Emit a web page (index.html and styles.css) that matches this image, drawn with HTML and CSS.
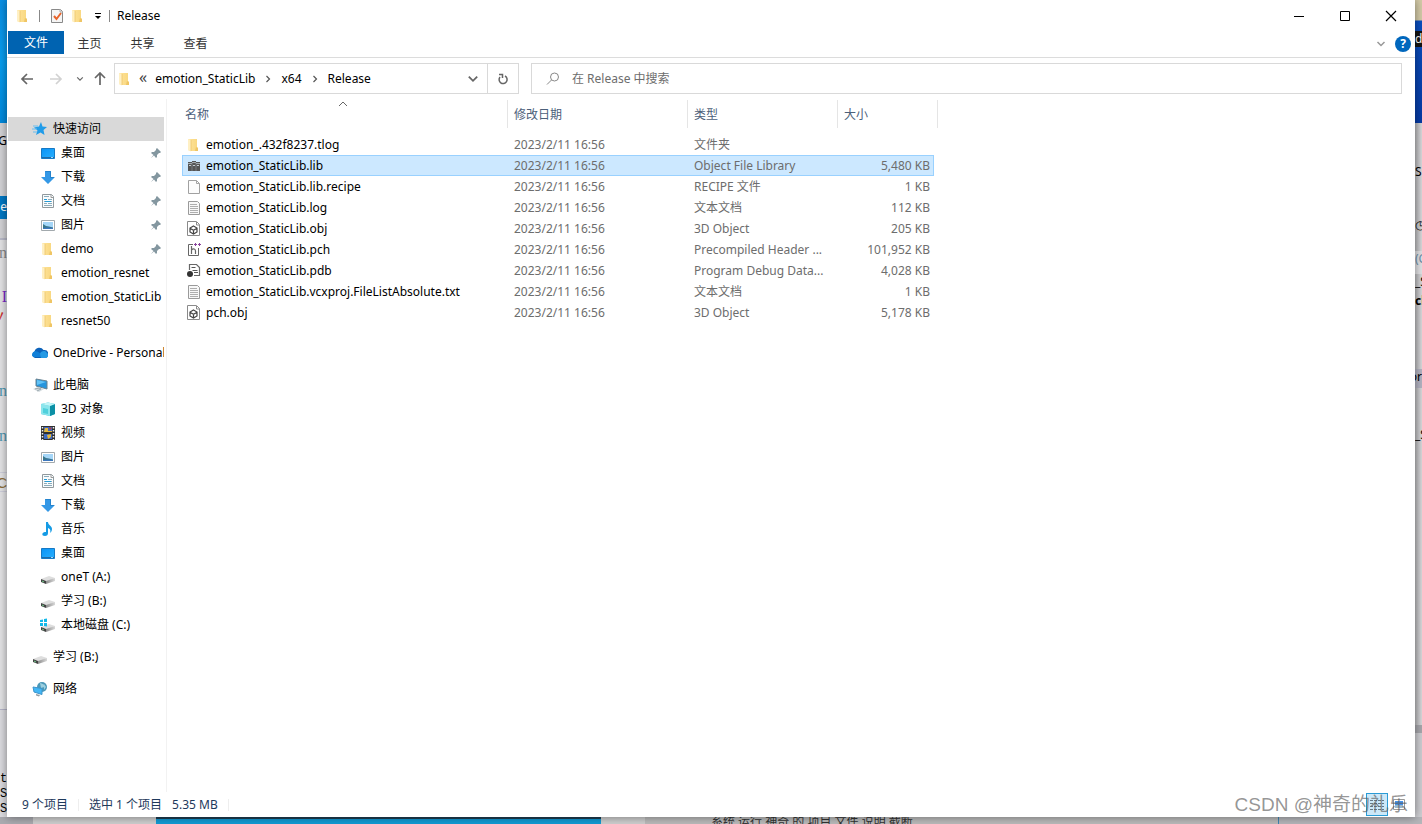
FILE: index.html
```html
<!DOCTYPE html>
<html lang="zh-CN">
<head>
<meta charset="utf-8">
<title>Release</title>
<link rel="stylesheet" href="styles.css">
</head>
<body>
<svg class="sprite" aria-hidden="true">
  <defs>
    <linearGradient id="gold" x1="0" x2="1"><stop offset="0" stop-color="#ffe39a"/><stop offset="1" stop-color="#f8d77f"/></linearGradient>
    <linearGradient id="blue" x1="0" y1="0" x2="1" y2="1"><stop offset="0" stop-color="#0a93f5"/><stop offset="1" stop-color="#29b0ff"/></linearGradient>
    <linearGradient id="steel" x1="0" x2="1"><stop offset="0" stop-color="#8d8d8d"/><stop offset="1" stop-color="#d8d8d8"/></linearGradient>
  </defs>
  <symbol id="folder" viewBox="0 0 16 16"><path d="M2 2h9v8l1 1v3H4l-2-1z" fill="url(#gold)"/><path d="M10 10l2 1v3h-3z" fill="#efc565"/><path d="M2 2l3 1v11.500L2 13z" fill="#fff0c4"/><path d="M5 3v11" stroke="#ecc469" stroke-width=".8"/></symbol>
  <symbol id="check" viewBox="0 0 16 16"><path d="M2.500 1.500h9l2 2v11h-11z" fill="#f5f5f5" stroke="#898989"/><path d="M11 1v3h3" fill="none" stroke="#aaa"/><path d="M5 8l2.500 3L12 5" fill="none" stroke="#e8642b" stroke-width="2"/></symbol>
  <symbol id="star" viewBox="0 0 16 16"><path d="M9 1l1.500 4.500L15 6l-3.500 3 1 5-4-2.600-4.500 2.600 1.500-4.500L2 6.500l5-1z" fill="#209ce9"/><path d="M1 5h5M0 8h5M1 11h4" stroke="#67bdf0"/></symbol>
  <symbol id="desktop" viewBox="0 0 16 16"><path d="M1.500 3.500h13v10h-13z" fill="url(#blue)" stroke="#1679c5"/><path d="M2 12.500h12" stroke="#1e6ba6"/><path d="M11 12.500h2" stroke="#9fd4f8"/></symbol>
  <symbol id="download" viewBox="0 0 16 16"><path d="M5 2h6v6h4l-7 7-7-7h4z" fill="#3498e6"/><path d="M5.500 2.500h5V8.500H14" fill="none" stroke="#2583cc"/></symbol>
  <symbol id="document" viewBox="0 0 16 16"><path d="M2.500 1.500h9l2 2v11h-11z" fill="#fafcfd" stroke="#919a9e"/><path d="M4 3.500h5M8 6.500h4M4 8.500h8M4 10.500h3M8 10.500h4M4 12.500h8" stroke="#8dacba"/><path d="M4 6.500h3M5 8.500h6" stroke="#229bd6"/><path d="M11 1.500v3h2" fill="none" stroke="#999"/></symbol>
  <symbol id="picture" viewBox="0 0 16 16"><path d="M1.500 3.500h13v10h-13z" fill="#fff" stroke="#a2a9ad"/><path d="M3 5h10v7H3z" fill="#a5d6f8"/><path d="M3 7l3 2 3 .500 4 1v1.500H3z" fill="#39768b"/><path d="M3 11l5-.500 5 .500v1H3z" fill="#3d77bd"/></symbol>
  <symbol id="pin" viewBox="0 0 10 10"><path d="M6 0l4 4-1 1-1 0-2 2v2L5 10 3 7.500 0 10l2.500-3L0 5l1-1h2l2-2V1z" fill="#8497a0"/></symbol>
  <symbol id="cloud" viewBox="0 0 16 16"><path d="M3 13a3.500 3.500 0 0 1-.500-6.500A5 5 0 0 1 11.500 5a4 4 0 0 1 1.500 8z" fill="#0c62ba"/><path d="M0 10c0-4 4-5 7-2.500l6 4.500H3c-2 0-3-.500-3-2z" fill="#1080d8"/><path d="M8 8.500c2-3 5-3 6.500-1 2.500 1 2 5.500-1 5.500H9z" fill="#2499e4"/></symbol>
  <symbol id="computer" viewBox="0 0 16 16"><path d="M4 2l11 2v8L4 9z" fill="#2695dd" stroke="#698391"/><path d="M5 3l9 2-9 3z" fill="#62c3f6"/><path d="M1 12l5-2 6 2-5 3z" fill="#d2dade"/><path d="M3 12l4-1 2 1-4 2" fill="none" stroke="#9aa8ae"/></symbol>
  <symbol id="cube" viewBox="0 0 16 16"><path d="M1 3l7-1.500L15 3v10l-5 2-9-2z" fill="#35c3d5"/><path d="M1 3l9 2v10l-9-2z" fill="#8be5ec"/><path d="M10 5l5-2v10l-5 2z" fill="#0b8fa5"/><path d="M1 3l7-1.500L15 3l-5 2z" fill="#c2f5f7"/><path d="M3 7l5 1v5l-5-1z" fill="#4fd0dc"/></symbol>
  <symbol id="film" viewBox="0 0 16 16"><path d="M1 1h14v14H1z" fill="#303030"/><path d="M2.500 2v13M13.500 2v13" stroke="#eee" stroke-width="1.500" stroke-dasharray="1.500 1.500"/><path d="M4 2h8v5H4zM4 9h8v5H4z" fill="#3d69c2"/><path d="M5 3h3v3h4v1H4zM7 10l4-1v3l-3 2z" fill="#e5b83b"/><path d="M9 2l3 1-2 2z" fill="#b13b3a"/></symbol>
  <symbol id="music" viewBox="0 0 16 16"><path d="M8 1c0 3 4 4 4 7 0 2-1 3-2 4 1-3 0-4-2-5v5c0 2-1 3-3 3-4 0-3-4 0-4h1V1z" fill="#159be5"/></symbol>
  <symbol id="drive" viewBox="0 0 16 16"><path d="M1 10l8-3 6 2-9 4z" fill="#dedede"/><path d="M1 10l5 2v3l-5-2z" fill="#434343"/><path d="M6 12l9-3v3l-9 3z" fill="url(#steel)"/><path d="M2 12l2 1" stroke="#73ce8c"/></symbol>
  <symbol id="windrive" viewBox="0 0 16 16"><use href="#drive"/><path d="M0 3l3-.5V5H0zM4 2l3-.5V5H4zM0 6h3v3H0zM4 6h3v3.500L4 9z" fill="#12b9e9"/></symbol>
  <symbol id="network" viewBox="0 0 16 16"><circle cx="10" cy="6" r="5" fill="#4b98b8"/><path d="M8 2c3 1 5 1 4 4l-3 1M12 3l2 3-2 3" fill="#9bcfdf"/><path d="M1 6l9 1.500v6L2 11z" fill="#43b7f6" stroke="#3d94cb"/><path d="M4 13l4 1-1 1.500-3-1z" fill="#919da4"/></symbol>
  <symbol id="lib" viewBox="0 0 16 16"><path d="M2 4h4v9H2zM6 3h4v10H6zM10 4h4v9h-4z" fill="#555"/><path d="M2 5.500h4M6 4.500h4M10 5.500h4" stroke="#a3abb0"/><path d="M6 5v8M10 5v8" stroke="#8d979e" stroke-width=".6"/><path d="M3 7.500h2M7 7.500h2M11 7.500h2" stroke="#c4ccd1"/></symbol>
  <symbol id="blank" viewBox="0 0 16 16"><path d="M2.500 1.500h8l3 3v10h-11z" fill="#fcfcfc" stroke="#a1a1a1"/><path d="M10.500 1.500v3h3" fill="none" stroke="#a5a5a5"/></symbol>
  <symbol id="textfile" viewBox="0 0 16 16"><path d="M2.500 1.500h9l2 2v11h-11z" fill="#f8f8f8" stroke="#9a9a9a"/><path d="M4 4.500h7M4 6.500h8M4 8.500h8M4 10.500h8M4 12.500h8" stroke="#aeaeae"/></symbol>
  <symbol id="object" viewBox="0 0 16 16"><path d="M1.500.500h9l3 3v11h-12z" fill="#fff" stroke="#8a8a8a"/><path d="M10.500 1v3h3" fill="none" stroke="#8a8a8a"/><path d="M7.500 5l3.500 2v4l-3.500 2L4 11V7zM4 7.200l3.500 2 3.500-2M7.500 9v4" fill="none" stroke="#444" stroke-width="1.200"/></symbol>
  <symbol id="header" viewBox="0 0 16 16"><path d="M7 2.500H2.500v11h10V6" fill="none" stroke="#666"/><path d="M5.500 4v8M5.500 8c2-2 4-1 4 1v3" fill="none" stroke="#666" stroke-width="1.200"/><path d="M8 2.500h3M9.500 1v3M12 2.500h3M13.500 1v3" stroke="#87419a"/></symbol>
  <symbol id="debug" viewBox="0 0 16 16"><path d="M3.500 7V1.500h7l3 3v8H8" fill="none" stroke="#666" stroke-width="1.200"/><path d="M5.500 4.500h4M6.500 7.500h5M8 9.500h4" stroke="#555"/><circle cx="4" cy="11" r="3" fill="#333"/></symbol>
  <symbol id="chev" viewBox="0 0 10 10"><path d="M1.500 3L5 6.500 8.500 3" fill="none" stroke="currentColor" stroke-width="1.500"/></symbol>
  <symbol id="right" viewBox="0 0 10 10"><path d="M3.500 2l3 3-3 3" fill="none" stroke="#555" stroke-width="1.200"/></symbol>
</svg>

<div class="desktop">
  <div class="strip left" aria-hidden="true">
    <div class="sky"></div>
    <div class="panel"><span class="l-g">G</span><span class="l-tab">ne</span></div>
    <div class="code"><span class="grey">n</span><span class="purple">I</span><span class="red">〃</span><span class="teal">n</span><span class="teal next">n</span><span class="brown">C</span></div>
    <div class="lower"><span class="mono">t</span><span class="mono">S</span><span class="mono">S</span></div>
  </div>

  <main class="window">
    <header class="titlebar">
      <svg class="ic"><use href="#folder"/></svg><i class="bar"></i>
      <svg class="ic"><use href="#check"/></svg>
      <svg class="ic small-gap"><use href="#folder"/></svg>
      <button class="quick" aria-label="自定义快速访问工具栏"><svg viewBox="0 0 8 8"><path d="M1 1.500h6" stroke="#000"/><path d="M1 4h6L4 7z"/></svg></button>
      <i class="bar dark"></i>
      <span class="title">Release</span>
      <div class="caption">
        <button aria-label="最小化"><svg viewBox="0 0 12 12"><path d="M1 6.500h10" stroke="#000"/></svg></button>
        <button aria-label="最大化"><svg viewBox="0 0 12 12"><path d="M1.500 1.500h9v9h-9z" fill="none" stroke="#000"/></svg></button>
        <button aria-label="关闭"><svg viewBox="0 0 12 12"><path d="M1 1l10 10M11 1L1 11" stroke="#000" stroke-width="1.200"/></svg></button>
      </div>
    </header>
    <nav class="ribbon">
      <button class="file">文件</button><button>主页</button><button>共享</button><button>查看</button>
      <div class="help"><button aria-label="展开功能区"><svg class="c10"><use href="#chev"/></svg></button><button class="q" aria-label="帮助">?</button></div>
    </nav>
    <div class="addressrow">
      <div class="arrows">
        <button aria-label="后退"><svg viewBox="0 0 14 14"><path d="M7 2L2 7l5 5M2 7h11" fill="none" stroke="#666" stroke-width="1.700"/></svg></button>
        <button aria-label="前进" disabled><svg viewBox="0 0 14 14"><path d="M7 2l5 5-5 5M1 7h11" fill="none" stroke="#d2d2d2" stroke-width="1.700"/></svg></button>
        <button class="recent" aria-label="最近位置"><svg class="c8"><use href="#chev"/></svg></button>
        <button aria-label="上移"><svg viewBox="0 0 14 14"><path d="M2 6l5-5 5 5M7 1v12" fill="none" stroke="#666" stroke-width="1.700"/></svg></button>
      </div>
      <div class="address">
        <svg class="ic"><use href="#folder"/></svg>
        <span class="more">«</span>
        <button>emotion_StaticLib</button><svg class="c10 sep"><use href="#right"/></svg>
        <button>x64</button><svg class="c10 sep"><use href="#right"/></svg>
        <button>Release</button>
        <button class="drop" aria-label="以前的位置"><svg class="c12"><use href="#chev"/></svg></button>
        <button class="refresh" aria-label="刷新"><svg viewBox="0 0 12 12"><path d="M8 3a4 4 0 1 1-5 1M2 1.500h3.500V5" fill="none" stroke="#666" stroke-width="1.500"/></svg></button>
      </div>
      <label class="search"><svg viewBox="0 0 14 14"><circle cx="8.500" cy="5" r="4" fill="none" stroke="#888"/><path d="M5.500 8L1 12.500" stroke="#888"/></svg><input type="text" aria-label="搜索" placeholder="在 Release 中搜索"></label>
    </div>

    <div class="body">
      <nav class="tree">
        <ul>
          <li><a class="root current" href="#"><svg class="ic"><use href="#star"/></svg><span>快速访问</span></a></li>
          <li><a href="#"><svg class="ic"><use href="#desktop"/></svg><span>桌面</span><svg class="pin"><use href="#pin"/></svg></a></li>
          <li><a href="#"><svg class="ic"><use href="#download"/></svg><span>下载</span><svg class="pin"><use href="#pin"/></svg></a></li>
          <li><a href="#"><svg class="ic"><use href="#document"/></svg><span>文档</span><svg class="pin"><use href="#pin"/></svg></a></li>
          <li><a href="#"><svg class="ic"><use href="#picture"/></svg><span>图片</span><svg class="pin"><use href="#pin"/></svg></a></li>
          <li><a href="#"><svg class="ic"><use href="#folder"/></svg><span>demo</span><svg class="pin"><use href="#pin"/></svg></a></li>
          <li><a href="#"><svg class="ic"><use href="#folder"/></svg><span>emotion_resnet</span></a></li>
          <li><a href="#"><svg class="ic"><use href="#folder"/></svg><span>emotion_StaticLib</span></a></li>
          <li><a href="#"><svg class="ic"><use href="#folder"/></svg><span>resnet50</span></a></li>
        </ul>
        <ul><li><a class="root" href="#"><svg class="ic"><use href="#cloud"/></svg><span>OneDrive - Personal</span></a></li></ul>
        <ul>
          <li><a class="root" href="#"><svg class="ic"><use href="#computer"/></svg><span>此电脑</span></a></li>
          <li><a href="#"><svg class="ic"><use href="#cube"/></svg><span>3D 对象</span></a></li>
          <li><a href="#"><svg class="ic"><use href="#film"/></svg><span>视频</span></a></li>
          <li><a href="#"><svg class="ic"><use href="#picture"/></svg><span>图片</span></a></li>
          <li><a href="#"><svg class="ic"><use href="#document"/></svg><span>文档</span></a></li>
          <li><a href="#"><svg class="ic"><use href="#download"/></svg><span>下载</span></a></li>
          <li><a href="#"><svg class="ic"><use href="#music"/></svg><span>音乐</span></a></li>
          <li><a href="#"><svg class="ic"><use href="#desktop"/></svg><span>桌面</span></a></li>
          <li><a href="#"><svg class="ic"><use href="#drive"/></svg><span>oneT (A:)</span></a></li>
          <li><a href="#"><svg class="ic"><use href="#drive"/></svg><span>学习 (B:)</span></a></li>
          <li><a href="#"><svg class="ic"><use href="#windrive"/></svg><span>本地磁盘 (C:)</span></a></li>
        </ul>
        <ul><li><a class="root" href="#"><svg class="ic"><use href="#drive"/></svg><span>学习 (B:)</span></a></li></ul>
        <ul><li><a class="root" href="#"><svg class="ic"><use href="#network"/></svg><span>网络</span></a></li></ul>
      </nav>
      <section class="files">
        <table>
          <colgroup><col class="c-name"><col class="c-date"><col class="c-type"><col class="c-size"></colgroup>
          <thead><tr><th>名称<svg class="sort" viewBox="0 0 10 6"><path d="M1 5l4-4 4 4" fill="none" stroke="#666"/></svg></th><th>修改日期</th><th>类型</th><th>大小</th></tr></thead>
          <tbody>
            <tr><td><div class="name"><svg class="ic"><use href="#folder"/></svg>emotion_.432f8237.tlog</div></td><td>2023/2/11 16:56</td><td>文件夹</td><td></td></tr>
            <tr class="selected"><td><div class="name"><svg class="ic"><use href="#lib"/></svg>emotion_StaticLib.lib</div></td><td>2023/2/11 16:56</td><td>Object File Library</td><td>5,480 KB</td></tr>
            <tr><td><div class="name"><svg class="ic"><use href="#blank"/></svg>emotion_StaticLib.lib.recipe</div></td><td>2023/2/11 16:56</td><td>RECIPE 文件</td><td>1 KB</td></tr>
            <tr><td><div class="name"><svg class="ic"><use href="#textfile"/></svg>emotion_StaticLib.log</div></td><td>2023/2/11 16:56</td><td>文本文档</td><td>112 KB</td></tr>
            <tr><td><div class="name"><svg class="ic"><use href="#object"/></svg>emotion_StaticLib.obj</div></td><td>2023/2/11 16:56</td><td>3D Object</td><td>205 KB</td></tr>
            <tr><td><div class="name"><svg class="ic"><use href="#header"/></svg>emotion_StaticLib.pch</div></td><td>2023/2/11 16:56</td><td>Precompiled Header ...</td><td>101,952 KB</td></tr>
            <tr><td><div class="name"><svg class="ic"><use href="#debug"/></svg>emotion_StaticLib.pdb</div></td><td>2023/2/11 16:56</td><td>Program Debug Data...</td><td>4,028 KB</td></tr>
            <tr><td><div class="name"><svg class="ic"><use href="#textfile"/></svg>emotion_StaticLib.vcxproj.FileListAbsolute.txt</div></td><td>2023/2/11 16:56</td><td>文本文档</td><td>1 KB</td></tr>
            <tr><td><div class="name"><svg class="ic"><use href="#object"/></svg>pch.obj</div></td><td>2023/2/11 16:56</td><td>3D Object</td><td>5,178 KB</td></tr>
          </tbody>
        </table>
      </section>
    </div>
    <footer class="status">
      <span>9 个项目</span><i></i><span>选中 1 个项目</span><span class="bytes">5.35 MB</span><i></i>
      <div class="views">
        <button class="on" aria-label="详细信息"><svg viewBox="0 0 16 16"><path d="M1 3.500h14M1 6.500h14M1 9.500h14M1 12.500h14" stroke="#667985" stroke-dasharray="3 1"/></svg></button>
        <button aria-label="大图标"><svg viewBox="0 0 16 16"><path d="M2.500 2.500h11v10h-11z" fill="#fff" stroke="#999"/><path d="M4 4h8v4H4z" fill="#4794ed"/><path d="M4 8h8v3H4z" fill="#9bb7cc"/></svg></button>
      </div>
    </footer>
    <div class="watermark">CSDN @神奇的礼乐</div>
  </main>

  <div class="strip right" aria-hidden="true">
    <div class="wall"><span>dll</span></div>
    <div class="side"><span class="s1">S</span><span class="s2">◷</span><span class="s3">(C</span><span>_S</span><b>cl</b><span class="s4">or</span><span class="s5">_S</span></div>
    <div class="end"></div>
  </div>
  <div class="under" aria-hidden="true"><div class="u1"></div><div class="u2"></div><div class="u3"></div><div class="u4"></div><div class="u5">系统 运行 神奇 的 项目 文件 说明 截断</div><div class="u6"></div></div>
</div>
</body>
</html>
```

FILE: styles.css
```css
* { box-sizing: border-box; }
body { margin: 0; font: 12px/16px "Noto Sans", "Noto Sans CJK SC", sans-serif; color: #000; }
button { border: 0; background: none; padding: 0; font: inherit; color: inherit; }
ul { list-style: none; margin: 0; padding: 0; }
svg { display: block; flex: none; }
.sprite { position: absolute; width: 0; height: 0; }
.ic { width: 16px; height: 16px; }
.c8 { width: 8px; height: 8px; }
.c10 { width: 10px; height: 10px; }
.c12 { width: 12px; height: 12px; }

.desktop { display: grid; grid-template-columns: 7px minmax(0, 1fr) 7px; grid-template-rows: minmax(0, 1fr) 7px; height: 100vh; overflow: hidden; background: #d9d9dc; }
.strip { display: flex; flex-direction: column; overflow: hidden; white-space: nowrap; }
.strip span, .strip b { display: block; }

.left { background: #e4e4e6; }
.sky { height: 123px; background: linear-gradient(#0a8fe4, #079ef0 50%, #0089dd); }
.panel { display: flex; flex-direction: column; align-items: flex-end; height: 117px; background: #d3d3d6; padding-top: 10px; border-bottom: 2px solid #b9bac9; }
.l-tab { margin-top: 47px; height: 23px; line-height: 22px; background: #0078c4; color: #fff; }
.code { display: flex; flex-direction: column; align-items: flex-end; font: 16px/20px "Liberation Serif", serif; height: 470px; padding-top: 3px; }
.code span { height: 20px; }
.grey { color: #888; }
.code .purple { color: #7a25c8; margin-top: 24px; }
.code .red { color: #c33; }
.code .teal { color: #4f97b0; margin-top: 54px; }
.code .next { margin-top: 25px; }
.code .brown { color: #8d6d3b; font-family: "Liberation Sans", sans-serif; font-size: 14px; margin-top: 26px; border: solid #cfcfdc; border-width: 1px 0; }
.lower { flex: 1; background: #dcdce0; border-top: 1px solid #b5b5c8; padding-top: 62px; }
.mono { font: 12px/15px "Liberation Mono", monospace; }

.right { background: linear-gradient(90deg, #b9b9bc, #d9d9db); }
.wall { height: 123px; padding-top: 31px; background: linear-gradient(#d4cba8 0 20px, #0a4fc0 21px, #063ba5); color: #fff; }
.wall span { background: #151515; }
.side { display: flex; flex-direction: column; padding-top: 41px; height: 602px; }
.side .s1 { height: 53px; }
.side .s2 { height: 34px; }
.side .s3 { color: #6f93ad; background: #e2e2e5; height: 23px; }
.side b { line-height: 22px; }
.side .s4 { align-self: flex-end; background: #b4b4c2; margin-top: 57px; height: 19px; }
.side .s5 { margin-top: 39px; }
.end { flex: 1; border-top: 8px solid #a8a8ad; background: #ceced2; }

.under { grid-column: 1 / -1; display: flex; overflow: hidden; background: #c6c6c6; }
.u1 { width: 33px; background: #aaabb0; }
.u2 { width: 123px; background: #cfcfcf; }
.u3 { width: 445px; background: #129bd4; border-top: 2px solid #1e3d50; }
.u4 { width: 44px; background: #cfcfcf; }
.u5 { flex: 1; padding-left: 66px; line-height: 10px; background: #bbb; color: #333; }
.u6 { width: 144px; background: #b5b6ba; border-left: 1px solid #3f86b5; }

.window { position: relative; display: flex; flex-direction: column; min-width: 0; background: #fff; box-shadow: 0 0 9px rgba(0, 0, 0, .45); z-index: 1; }

.titlebar { display: flex; align-items: center; height: 31px; padding-left: 8px; padding-right: 1px; }
.bar { width: 1px; height: 12px; margin: 0 9px 0 8px; background: #888; }
.small-gap { margin-left: 5px; }
.quick { margin-left: 8px; }
.quick svg { width: 8px; height: 8px; }
.bar.dark { margin: 0 7px; }
.caption { display: flex; margin-left: auto; }
.caption button { width: 46px; height: 30px; display: grid; place-items: center; }
.caption svg { width: 12px; height: 12px; }

.ribbon { display: flex; height: 27px; padding-left: 1px; border-bottom: 1px solid #dcdcdc; color: #333; }
.ribbon > button { width: 53px; height: 26px; padding-right: 2px; }
.ribbon > .file { width: 56px; height: 23px; padding: 0; background: #0063b1; color: #fff; }
.help { margin-left: auto; display: flex; align-items: center; gap: 9px; padding-right: 4px; color: #999; }
.help .q { width: 16px; height: 16px; border-radius: 8px; background: #0067bd; color: #fff; font-weight: bold; line-height: 16px; }

.addressrow { display: flex; height: 41px; padding: 5px 13px 5px 0; gap: 12px; }
.arrows { display: flex; align-items: center; width: 95px; padding-left: 13px; gap: 15px; }
.arrows svg { width: 14px; height: 14px; }
.arrows .recent { margin: 0 -6px 0 -2px; color: #666; }
.arrows .recent svg { width: 8px; height: 8px; }
.address { display: flex; align-items: center; width: 405px; border: 1px solid #d9d9d9; padding-left: 2px; }
.more { font-size: 16px; margin: 0 8px 3px 6px; color: #444; }
.sep { margin: 0 8px; }
.drop { margin-left: auto; margin-right: 8px; color: #666; }
.refresh { width: 31px; height: 29px; display: grid; place-items: center; border-left: 1px solid #d9d9d9; }
.refresh svg { width: 12px; height: 12px; }
.search { flex: 1; display: flex; align-items: center; border: 1px solid #d9d9d9; padding-left: 14px; gap: 12px; }
.search svg { width: 14px; height: 14px; }
.search input { flex: 1; border: 0; padding: 0; outline: 0; font: inherit; background: none; }
.search input::placeholder { color: #6d6d6d; opacity: 1; }

.addressrow .arrows { flex: none; }
.body { flex: 1; display: flex; min-height: 0; }
.tree { width: 160px; border-right: 1px solid #f2f2f2; padding: 18px 2px 0 1px; }
.tree ul { margin-bottom: 8px; }
.tree a { display: flex; align-items: center; gap: 5px; height: 24px; padding-left: 32px; overflow: hidden; white-space: nowrap; color: #000; text-decoration: none; }
.tree .root { padding-left: 24px; }
.tree .current { background: #d9d9d9; }
.pin { width: 10px; height: 10px; margin: 0 3px 0 auto; }

.files { flex: 1; padding: 1px 0 0 15px; }
table { width: 752px; table-layout: fixed; border-collapse: separate; border-spacing: 0; }
.c-name { width: 326px; }
.c-date { width: 180px; }
.c-type { width: 150px; }
.c-size { width: 96px; }
th { position: relative; height: 30px; padding: 0 6px; text-align: left; font-weight: normal; color: #4c607a; }
th:first-child { padding-left: 3px; }
th::after { content: ""; position: absolute; right: 0; top: 0; height: 28px; width: 1px; background: #e5e5e5; }
th:last-child::after { right: -4px; }
thead::after { content: ""; display: block; height: 4px; }
.sort { position: absolute; left: 156px; top: 1px; width: 10px; height: 6px; }
td { height: 21px; padding: 0 6px; line-height: 19px; color: #6d6d6d; white-space: nowrap; border: solid transparent; border-width: 1px 0; }
td:first-child { padding: 0 3px; color: #000; border-left-width: 1px; }
td:last-child { text-align: right; padding-right: 3px; border-right-width: 1px; }
.name { display: flex; align-items: center; gap: 4px; }
.selected td { background: #cce8ff; border-color: #99d1ff; }

.status { display: flex; align-items: center; height: 25px; padding-left: 15px; color: #1e395b; }
.status i { width: 1px; height: 12px; margin: 0 10px; background: #eee; }
.bytes { margin-left: 10px; }
.views { margin-left: auto; display: flex; align-items: center; padding-right: 5px; }
.views button { width: 22px; height: 23px; display: grid; place-items: center; }
.views .on { background: #cce8f8; border: 1px solid #2a9bd5; }
.views svg { width: 16px; height: 16px; }
.watermark { position: absolute; right: 7px; bottom: 0; font: 19px/24px "Liberation Sans", "Noto Sans CJK SC", sans-serif; color: rgba(90, 90, 90, .65); white-space: nowrap; }
```
